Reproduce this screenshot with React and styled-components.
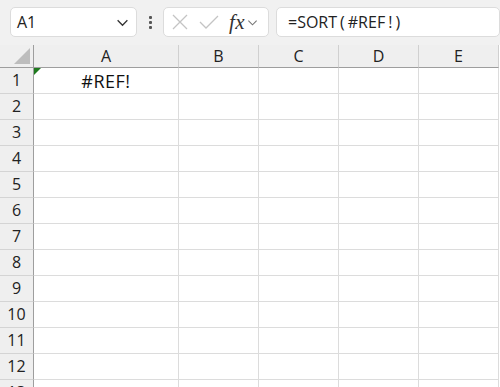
import styled, { createGlobalStyle } from "styled-components";

const Global = createGlobalStyle`
  html, body {
    margin: 0;
    padding: 0;
    background: #ffffff;
    overflow: hidden;
  }
  body {
    font-family: "Open Sans", "Noto Sans", sans-serif;
  }
`;

const Page = styled.div`
  width: 500px;
  height: 387px;
  overflow: hidden;
  background: #fff;
`;

const Toolbar = styled.div`
  height: 45px;
  background: #f1f1f1;
  display: flex;
  align-items: flex-start;
  padding: 7px 0 0 10px;
  box-sizing: border-box;
`;

const Box = styled.div`
  height: 30px;
  box-sizing: border-box;
  background: #fff;
  border: 1px solid #dcdcdc;
  border-radius: 5px;
  display: flex;
  align-items: center;
  flex: ${(p) => (p.$grow ? "1 0 auto" : "0 0 auto")};
  width: ${(p) => (p.$w ? `${p.$w}px` : "auto")};
`;

const NameText = styled.span`
  font-size: 16px;
  color: #222;
  padding-left: 6px;
  flex: 1;
`;

const Dots = styled.div`
  width: 26px;
  height: 30px;
  display: flex;
  flex-direction: column;
  align-items: center;
  justify-content: center;
  gap: 2px;
  span {
    width: 3px;
    height: 3px;
    background: #555;
    border-radius: 1px;
  }
`;

const Formula = styled.span`
  font-size: 16px;
  color: #222;
  padding-left: 11px;
  white-space: nowrap;
`;

const Wide = styled.span`
  margin: 0 3px;
`;

const Fx = styled.span`
  font-family: "Liberation Serif", serif;
  font-style: italic;
  font-size: 21px;
  color: #333;
  margin-left: 9px;
  letter-spacing: 0.5px;
`;

const Gap = styled.div`
  width: ${(p) => p.$w}px;
  flex: 0 0 auto;
`;

const Sheet = styled.div`
  display: grid;
  grid-template-columns: 34px 145px 80px 80px 80px 80px;
  grid-auto-rows: 26px;
  grid-template-rows: 23px;
`;

const ColHead = styled.div`
  background: #efefef;
  border-bottom: 1px solid #9e9e9e;
  border-right: 1px solid ${(p) => (p.$corner ? "#9e9e9e" : "#d0d0d0")};
  box-sizing: border-box;
  display: flex;
  align-items: center;
  justify-content: center;
  font-size: 16px;
  color: #222;
  position: relative;
`;

const RowHead = styled.div`
  background: #efefef;
  border-right: 1px solid #9e9e9e;
  border-bottom: 1px solid #d4d4d4;
  box-sizing: border-box;
  display: flex;
  align-items: center;
  justify-content: center;
  font-size: 16px;
  color: #222;
  padding-bottom: 1px;
`;

const Cell = styled.div`
  border-right: 1px solid #dcdcdc;
  border-bottom: 1px solid #dcdcdc;
  box-sizing: border-box;
  display: flex;
  align-items: center;
  justify-content: center;
  font-size: 18px;
  letter-spacing: 0.5px;
  color: #111;
  position: relative;
`;

const ErrFlag = styled.div`
  position: absolute;
  left: 0;
  top: 0;
  width: 0;
  height: 0;
  border-top: 7px solid #1e7a1e;
  border-right: 7px solid transparent;
`;

const CornerTri = styled.div`
  position: absolute;
  right: 3px;
  bottom: 3px;
  width: 0;
  height: 0;
  border-bottom: 16px solid #bdbdbd;
  border-left: 16px solid transparent;
`;

const Chevron = ({ size = 12, color = "#444" }) => (
  <svg width={size} height={size} viewBox="0 0 12 12" fill="none">
    <path d="M1.5 4 L6 8.5 L10.5 4" stroke={color} strokeWidth="1.2" />
  </svg>
);

const cols = ["A", "B", "C", "D", "E"];
const rows = Array.from({ length: 13 }, (_, i) => i + 1);

export default function App() {
  return (
    <Page>
      <Global />
      <Toolbar>
        <Box $w={127}>
          <NameText>A1</NameText>
          <span style={{ display: "flex", marginRight: 7 }}>
            <Chevron size={13} color="#333" />
          </span>
        </Box>
        <Dots>
          <span />
          <span />
          <span />
        </Dots>
        <Box $w={106}>
          <svg width="20" height="20" viewBox="0 0 20 20" style={{ marginLeft: 6 }}>
            <path d="M3 3 L17 17 M17 3 L3 17" stroke="#c4c4c4" strokeWidth="1.3" fill="none" />
          </svg>
          <svg width="22" height="20" viewBox="0 0 22 20" style={{ marginLeft: 8 }}>
            <path d="M2 10 L8 16 L20 4" stroke="#c4c4c4" strokeWidth="1.3" fill="none" />
          </svg>
          <Fx>fx</Fx>
          <span style={{ display: "flex", marginLeft: 2 }}>
            <Chevron size={11} color="#777" />
          </span>
        </Box>
        <Gap $w={7} />
        <Box $grow>
          <Formula>
            =SORT<Wide>(</Wide>#REF<Wide>!</Wide>)
          </Formula>
        </Box>
      </Toolbar>
      <Sheet>
        <ColHead $corner>
          <CornerTri />
        </ColHead>
        {cols.map((c) => (
          <ColHead key={c}>{c}</ColHead>
        ))}
        {rows.map((r) => (
          <>
            <RowHead key={`h${r}`}>{r}</RowHead>
            {cols.map((c) => (
              <Cell key={`${c}${r}`}>
                {r === 1 && c === "A" && (
                  <>
                    <ErrFlag />
                    #REF!
                  </>
                )}
              </Cell>
            ))}
          </>
        ))}
      </Sheet>
    </Page>
  );
}
